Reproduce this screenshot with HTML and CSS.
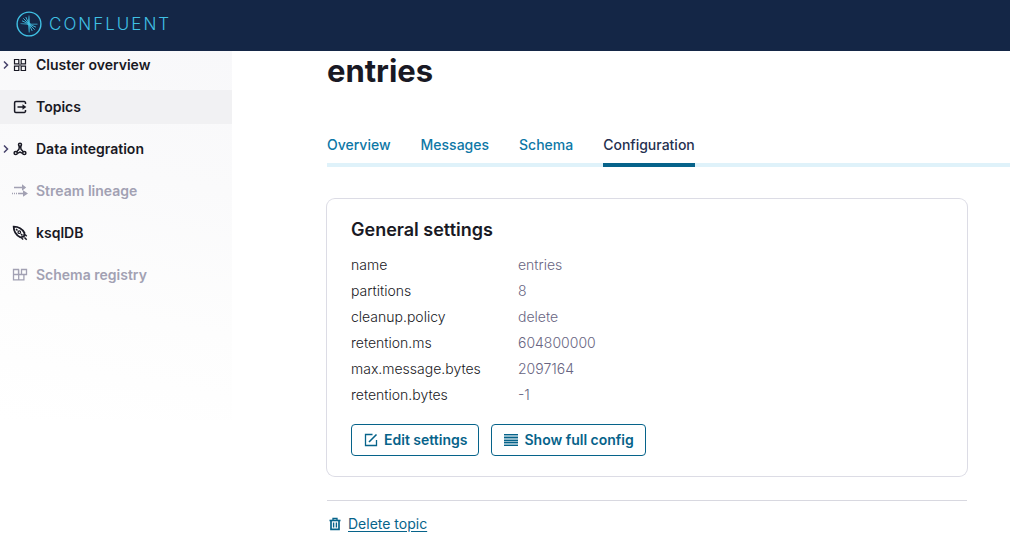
FILE: index.html
```html
<!DOCTYPE html>
<html lang="en">
<head>
<meta charset="utf-8">
<meta name="viewport" content="width=device-width, initial-scale=1">
<title>entries - Configuration</title>
<link rel="stylesheet" href="styles.css">
</head>
<body>
<header class="topbar">
  <a class="brand" href="#home">
    <svg class="brand-mark" viewBox="0 0 26 26" fill="none" stroke="currentColor">
      <circle cx="13" cy="13" r="11.9" stroke-width="1.4"/>
      <path d="M7.300 7.300l5 5M9.800 6l2.500 5.500M6 9.800l5.500 2.500M18.700 18.700l-5-5M16.200 20l-2.500-5.500M20 16.200l-5.500-2.500" stroke-width=".9"/>
      <path d="M4.500 12.600l7-.1.500-1L12.700 4.500h.6l.5 7.200 1 1 6.700.1v.6l-6.800.2-.9 1-.3 6.900h-.7l-.5-7-1-1.100-6.800-.3z" fill="currentColor" stroke="none"/>
    </svg>
    <span class="brand-name">CONFLUENT</span>
  </a>
</header>
<div class="layout">
  <nav class="sidebar" aria-label="Cluster">
    <a class="nav-item" href="#cluster">
      <svg class="chevron" viewBox="0 0 6 10"><path d="M1 1.500L4.500 5 1 8.500"/></svg>
      <svg class="nav-icon" viewBox="0 0 16 16"><path d="M2.500 2.500h4.300v4.300H2.500zM9.200 2.500h4.300v4.300H9.200zM2.500 9.200h4.300v4.300H2.500zM9.200 9.200h4.300v4.300H9.200z" stroke-width="1.200"/><path d="M6.600 8h2.800M8 6.600v2.800" stroke-width=".6"/></svg>
      Cluster overview
    </a>
    <a class="nav-item current" href="#topics" aria-current="page">
      <svg class="nav-icon" viewBox="0 0 16 16"><path d="M13.500 5V3.800a1.200 1.200 0 0 0-1.200-1.200H3.800a1.200 1.200 0 0 0-1.200 1.200v8.400a1.200 1.200 0 0 0 1.200 1.200h8.500a1.200 1.200 0 0 0 1.200-1.200V11M5.500 8H12" stroke-width="1.500"/><path d="M10.500 5.300L14.300 8l-3.800 2.700z" class="solid"/></svg>
      Topics
    </a>
    <a class="nav-item" href="#integration">
      <svg class="chevron" viewBox="0 0 6 10"><path d="M1 1.500L4.500 5 1 8.500"/></svg>
      <svg class="nav-icon" viewBox="0 0 16 16"><g stroke-width="1.500"><circle cx="8" cy="3.700" r="1.500"/><circle cx="3.700" cy="12" r="1.600"/><circle cx="12.300" cy="12" r="1.600"/><path d="M7.400 5.200L7 8.200l-2.300 2.500M8.600 5.200L9 8.200l2.300 2.500M5.400 12.300L8 11l2.600 1.300"/></g></svg>
      Data integration
    </a>
    <a class="nav-item disabled" href="#lineage" aria-disabled="true">
      <svg class="nav-icon" viewBox="0 0 16 16"><path d="M2 4.500h9M0 10.500h1M2 10.500h1M4 10.500h1M6 10.500h6" stroke-width="1.600"/><path d="M10 1.300l4.200 3.200L10 7.700zM11 7.300l5 3.200-5 3.200z" class="solid"/></svg>
      Stream lineage
    </a>
    <a class="nav-item" href="#ksqldb">
      <svg class="nav-icon" viewBox="0 0 16 16"><path d="M1.700 1.700C6.500 1.700 10 3.500 12.500 8l-.6 3.600-3.700.7C3.600 9.700 1.700 6.500 1.700 1.700z" stroke-width="1.800"/><circle cx="7.300" cy="7.200" r="1.300" stroke-width="1.200"/><path d="M4 4l1.500 1.500M9 9l1.500 1.500M13 9.500l1.700 1.700M9.500 13l1.700 1.500M12.500 12.500l2.200 2.200" stroke-width="1.500"/></svg>
      ksqlDB
    </a>
    <a class="nav-item disabled" href="#schema" aria-disabled="true">
      <svg class="nav-icon" viewBox="0 0 16 16"><path d="M1.500 2.500h5v5h-5zM9.500 2.500h5v5h-5zM1.500 7.500h5.200v5.300H1.500zM6.700 7.500h5.200v5.300H6.700zM6.700 2.500v5h3" stroke-width="1.300"/></svg>
      Schema registry
    </a>
  </nav>
  <main class="main">
    <h1 class="title">entries</h1>
    <nav class="tabs" aria-label="Topic">
      <a class="tab" href="#overview">Overview</a>
      <a class="tab" href="#messages">Messages</a>
      <a class="tab" href="#topic-schema">Schema</a>
      <a class="tab active" href="#configuration" aria-current="page">Configuration</a>
    </nav>
    <div class="content">
      <section class="card">
        <h2 class="card-title">General settings</h2>
        <dl class="settings">
          <dt>name</dt><dd>entries</dd>
          <dt>partitions</dt><dd>8</dd>
          <dt>cleanup.policy</dt><dd>delete</dd>
          <dt>retention.ms</dt><dd>604800000</dd>
          <dt>max.message.bytes</dt><dd>2097164</dd>
          <dt>retention.bytes</dt><dd>-1</dd>
        </dl>
        <div class="actions">
          <button class="button" type="button">
            <svg class="button-icon" viewBox="0 0 14 14" fill="none" stroke="currentColor"><path d="M8.500 1.500h-7v11h11V7" stroke-width="1.300"/><path d="M5 9L12.500 1.500" stroke-width="1.600"/></svg>
            Edit settings
          </button>
          <button class="button" type="button">
            <svg class="button-icon" viewBox="0 0 14 14" fill="none" stroke="currentColor"><path d="M0 1.500h14M0 4.500h14M0 7.500h14M0 9.500h14M0 12.500h14" stroke-width="1.200"/><path d="M0 1h14v12H0z" fill="currentColor" fill-opacity=".45" stroke="none"/></svg>
            Show full config
          </button>
        </div>
      </section>
      <footer class="danger">
        <a class="delete" href="#delete">
          <svg class="trash" viewBox="0 0 12 14" fill="none" stroke="currentColor"><path d="M.5 3.500h11" stroke-width="1.600"/><path d="M4 3V1.500h4V3" stroke-width="1.300"/><path d="M2 4v8.300h8V4" stroke-width="1.700"/><path d="M4.600 5.500v5M7.400 5.500v5" stroke-width="1.400"/></svg>
          <span class="delete-label">Delete topic</span>
        </a>
      </footer>
    </div>
  </main>
</div>
</body>
</html>
```
FILE: styles.css
```css
* { box-sizing: border-box; }

body {
  margin: 0;
  background: #fff;
  color: #191924;
  font: 14px/20px Inter, "Liberation Sans", sans-serif;
}

a { color: inherit; text-decoration: none; }

.topbar {
  position: sticky;
  top: 0;
  z-index: 1;
  display: flex;
  align-items: center;
  height: 51px;
  padding: 0 16px;
  background: #142646;
}

.brand {
  display: flex;
  align-items: center;
  gap: 7px;
  padding-bottom: 4px;
  color: #40c0e4;
}

.brand-mark { width: 26px; height: 26px; }

.brand-name {
  font-size: 17px;
  font-weight: 300;
  letter-spacing: 2px;
}

/* The page content sits slightly scrolled beneath the top bar. */
.layout {
  display: flex;
  align-items: flex-start;
  margin-top: -3px;
}

.sidebar {
  display: flex;
  flex: 0 0 232px;
  flex-direction: column;
  gap: 8px;
  min-height: 372px;
  background: linear-gradient(190deg, #f8f8fa 0%, #fafafb 35%, #fdfdfd 70%, #fff 100%);
}

.nav-item {
  display: flex;
  align-items: center;
  position: relative;
  gap: 8px;
  height: 34px;
  padding-left: 12px;
  font-weight: 600;
}

.nav-item.current { background: #f1f1f3; }
.nav-item.disabled { color: #a2a1b3; }

.nav-icon {
  width: 16px;
  height: 16px;
  fill: none;
  stroke: currentColor;
}

.nav-icon .solid { fill: currentColor; stroke: none; }

.chevron {
  position: absolute;
  left: 3px;
  width: 6px;
  height: 10px;
  fill: none;
  stroke: #45416a;
  stroke-width: 1.5;
}

.main {
  flex: 1;
  min-width: 0;
  padding: 4px 0 18px 95px;
}

.title {
  margin: 0;
  font-size: 31px;
  font-weight: 700;
  line-height: 38px;
}

.tabs {
  display: flex;
  gap: 30px;
  margin-top: 45px;
  box-shadow: inset 0 -4px #dff2fa;
}

.tab {
  padding-bottom: 8px;
  border-bottom: 4px solid transparent;
  color: #0d77a6;
  font-weight: 500;
}

.tab.active { border-color: #06638a; color: #25304f; }

.content {
  margin-right: 43px;
  padding-top: 32px;
}

.card {
  padding: 20px 24px;
  border-radius: 8px;
  box-shadow: 0 0 0 1px #dcdce5;
}

.card-title {
  margin: 0;
  font-size: 18px;
  font-weight: 600;
  line-height: 22px;
}

.settings {
  display: grid;
  grid-template-columns: 167px 1fr;
  margin: 11px 0 0;
  font-weight: 300;
  line-height: 26px;
}

.settings dd { margin: 0; color: #686582; }

.actions {
  display: flex;
  gap: 12px;
  margin-top: 16px;
}

.button {
  display: flex;
  align-items: center;
  gap: 6px;
  height: 32px;
  padding: 0 11px 0 12px;
  border: 1px solid #06638a;
  border-radius: 4px;
  background: #fff;
  color: #06638a;
  font: inherit;
  font-weight: 600;
}

.button-icon { width: 14px; height: 14px; }

.danger {
  margin-top: 24px;
  padding-top: 13px;
  border-top: 1px solid #d8d8e0;
}

.delete {
  display: inline-flex;
  align-items: center;
  gap: 7px;
  padding-left: 2px;
  color: #06638a;
}

.trash { width: 12px; height: 14px; }
.delete-label { text-decoration: underline; text-underline-offset: 2px; }
```
